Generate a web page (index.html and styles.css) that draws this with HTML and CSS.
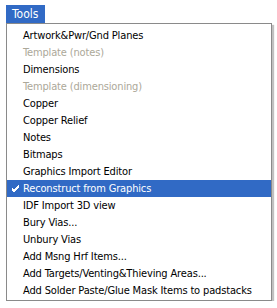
FILE: index.html
```html
<!DOCTYPE html>
<html lang="en">

<head>
    <meta charset="UTF-8">
    <title>Tools menu</title>
    <link rel="stylesheet" href="styles.css">
</head>

<body>
    <div class="menubar">
        <span class="tab">Tools</span>
    </div>
    <div class="menu">
        <div class="item">Artwork&amp;Pwr/Gnd Planes</div>
        <div class="item disabled">Template (notes)</div>
        <div class="item">Dimensions</div>
        <div class="item disabled">Template (dimensioning)</div>
        <div class="item">Copper</div>
        <div class="item">Copper Relief</div>
        <div class="item">Notes</div>
        <div class="item">Bitmaps</div>
        <div class="item">Graphics Import Editor</div>
        <div class="item active">
            <svg class="check" width="9" height="9" viewBox="0 0 9 9">
                <path d="M1 4 L3 6 L8 1 M1 5 L3 7 L8 2 M1 6 L3 8 L8 3" stroke="#fff" stroke-width="1" fill="none" />
            </svg>
            Reconstruct from Graphics
        </div>
        <div class="item">IDF Import 3D view</div>
        <div class="item">Bury Vias...</div>
        <div class="item">Unbury Vias</div>
        <div class="item">Add Msng Hrf Items...</div>
        <div class="item">Add Targets/Venting&amp;Thieving Areas...</div>
        <div class="item">Add Solder Paste/Glue Mask Items to padstacks</div>
    </div>
</body>

</html>
```

FILE: styles.css
```css
body {
    margin: 0;
    background: #fff;
    font-family: "DejaVu Sans Condensed", "DejaVu Sans", sans-serif;
    font-size: 11px;
    color: #000;
}

.menubar {
    padding: 5px 0 0 6px;
    height: 18px;
}

.tab {
    display: inline-block;
    height: 18px;
    line-height: 18px;
    padding: 0 7px 0 6px;
    background: #316ac5;
    color: #fff;
    font-size: 12px;
}

.menu {
    width: 264px;
    margin-left: 6px;
    padding: 3px 0 1px;
    border: 1px solid #8a8a8a;
    box-shadow: 2px 2px 1px #c0c0c0;
}

.item {
    position: relative;
    height: 17px;
    line-height: 17px;
    padding-left: 16px;
    white-space: nowrap;
    letter-spacing: -0.15px;
}

.disabled {
    color: #aca899;
}

.active {
    background: #316ac5;
    color: #fff;
}

.check {
    position: absolute;
    left: 4px;
    top: 4px;
}
```
